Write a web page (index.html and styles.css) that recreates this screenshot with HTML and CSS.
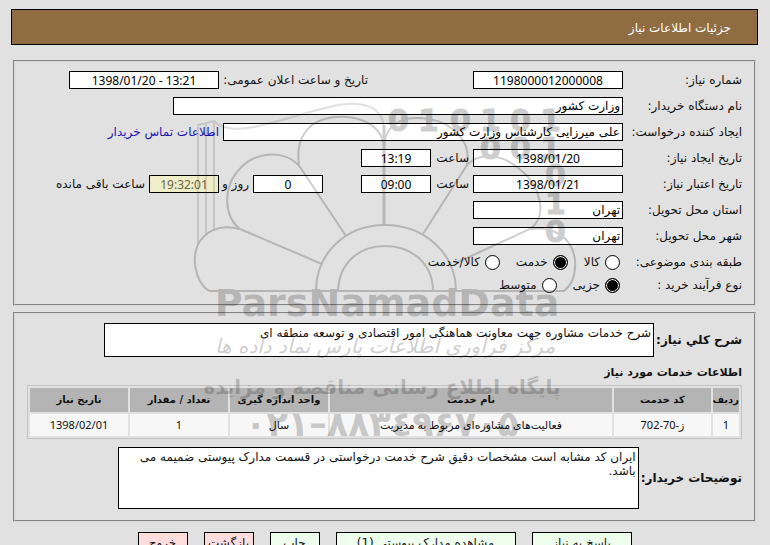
FILE: index.html
```html
<!DOCTYPE html>
<html lang="fa" dir="rtl">
<head>
<meta charset="utf-8">
<title>جزئیات اطلاعات نیاز</title>
<link rel="stylesheet" href="styles.css">
</head>
<body>
<header class="titlebar">جزئیات اطلاعات نیاز</header>

<main class="page">
<form>
  <section class="panel general">
    <div class="row">
      <label class="name" for="num">شماره نیاز:</label>
      <input class="field medium" id="num" value="1198000012000008" readonly>
      <label class="second" for="announce">تاریخ و ساعت اعلان عمومی:</label>
      <input class="field medium" id="announce" value="1398/01/20 - 13:21" dir="ltr" readonly>
    </div>
    <div class="row">
      <label class="name" for="org">نام دستگاه خریدار:</label>
      <input class="field text widest" id="org" value="وزارت کشور" readonly>
    </div>
    <div class="row">
      <label class="name" for="creator">ایجاد کننده درخواست:</label>
      <input class="field text wide" id="creator" value="علی میرزایی کارشناس وزارت کشور" readonly>
      <a class="contact" href="#">اطلاعات تماس خریدار</a>
    </div>
    <div class="row">
      <label class="name" for="cdate">تاریخ ایجاد نیاز:</label>
      <input class="field medium" id="cdate" value="1398/01/20" readonly>
      <label class="hour" for="ctime">ساعت</label>
      <input class="field small" id="ctime" value="13:19" readonly>
    </div>
    <div class="row">
      <label class="name" for="vdate">تاریخ اعتبار نیاز:</label>
      <input class="field medium" id="vdate" value="1398/01/21" readonly>
      <label class="hour" for="vtime">ساعت</label>
      <input class="field small" id="vtime" value="09:00" readonly>
      <input class="field small days" id="days" value="0" readonly>
      <label class="and" for="days">روز و</label>
      <input class="field small timer" id="left" value="19:32:01" readonly>
      <label for="left">ساعت باقی مانده</label>
    </div>
    <div class="row">
      <label class="name" for="province">استان محل تحویل:</label>
      <input class="field text medium" id="province" value="تهران" readonly>
    </div>
    <div class="row">
      <label class="name" for="city">شهر محل تحویل:</label>
      <input class="field text medium" id="city" value="تهران" readonly>
    </div>
    <div class="row choice" role="radiogroup" aria-labelledby="subject">
      <span class="name" id="subject">طبقه بندی موضوعی:</span>
      <label class="option"><input type="radio" name="subject">کالا</label>
      <label class="option"><input type="radio" name="subject" checked>خدمت</label>
      <label class="option"><input type="radio" name="subject">کالا/خدمت</label>
    </div>
    <div class="row choice" role="radiogroup" aria-labelledby="process">
      <span class="name" id="process">نوع فرآیند خرید :</span>
      <label class="option"><input type="radio" name="process" checked>جزیی</label>
      <label class="option"><input type="radio" name="process">متوسط</label>
    </div>
  </section>

  <section class="panel details">
    <div class="block">
      <label for="summary">شرح کلي نیاز:</label>
      <textarea class="area summary" id="summary" readonly>شرح خدمات مشاوره جهت معاونت هماهنگی امور اقتصادی و توسعه منطقه ای</textarea>
    </div>
    <h2>اطلاعات خدمات مورد نیاز</h2>
    <table>
      <colgroup><col class="c1"><col class="c2"><col class="c3"><col class="c4"><col class="c4"><col class="c4"></colgroup>
      <thead>
        <tr><th>ردیف</th><th>کد خدمت</th><th>نام خدمت</th><th>واحد اندازه گیری</th><th>تعداد / مقدار</th><th>تاریخ نیاز</th></tr>
      </thead>
      <tbody>
        <tr><td>1</td><td>ز-70-702</td><td>فعالیت‌های مشاوره‌ای مربوط به مدیریت</td><td>سال</td><td>1</td><td>1398/02/01</td></tr>
      </tbody>
    </table>
    <div class="block">
      <label for="notes">توضیحات خریدار:</label>
      <textarea class="area notes" id="notes" readonly>ایران کد مشابه است مشخصات دقیق شرح خدمت درخواستی در قسمت مدارک پیوستی ضمیمه می باشد.</textarea>
    </div>
  </section>

  <div class="actions">
    <button type="button" class="reply">پاسخ به نیاز</button>
    <button type="button" class="docs">مشاهده مدارک پیوستی (1)</button>
    <button type="button">چاپ</button>
    <button type="button" class="leave">بازگشت</button>
    <button type="button" class="leave">خروج</button>
  </div>
</form>
</main>

<svg class="watermark" viewBox="0 0 770 545" aria-hidden="true">
  <g class="lines">
    <path d="M209 291H565"/>
    <path d="M316 291C316 253 346 225 385 225S456 253 456 291"/>
    <path d="M338 291C339 263 359 246 385 246S433 263 433 291"/>
    <path d="M209 291C194 281 191 255 200 241C210 227 226 225 240 229L322 264"/>
    <path d="M240 229C224 217 223 189 237 172C254 150 286 149 300 167L346 236"/>
    <path d="M299 165C295 137 309 119 336 117C363 115 384 128 384 149"/>
    <path d="M384 125V225" class="thick"/>
    <path d="M384 149C384 129 396 117 419 118C449 119 472 139 467 165L423 234"/>
    <path d="M467 165C479 152 502 154 518 168C540 184 549 216 530 229L458 262"/>
    <path d="M530 229C552 226 572 236 575 260C576 275 572 285 564 291"/>
  </g>
  <g class="lines soft">
    <path d="M198 245V125L214 121C222 130 240 130 254 127C285 120 307 112 333 106C360 100 384 105 384 130"/>
    <path d="M206 236V124M214 231V121"/>
  </g>
  <g class="bits">
    <text x="388" y="131">0</text>
    <text x="418" y="131">1</text>
    <text x="450" y="131">0</text>
    <text x="480" y="131">1</text>
    <text x="510" y="131">0</text>
    <text x="540" y="131">1</text>
    <text x="480" y="159">0</text>
    <text x="510" y="159">0</text>
    <text x="540" y="159">1</text>
    <text x="545" y="186">0</text>
    <text x="545" y="214">1</text>
    <text x="545" y="242">0</text>
  </g>
  <text class="brand" x="387" y="316">ParsNamadData</text>
  <text class="script" x="385" y="353">مرکز فرآوری اطلاعات پارس نماد داده ها</text>
  <text class="slogan" x="382" y="394">پایگاه اطلاع رسانی مناقصه و مزایده</text>
  <text class="phone" x="382" y="436">۰۲۱–۸۸۳٤۹۶۷۰۵</text>
</svg>
</body>
</html>
```

FILE: styles.css
```css
* { box-sizing: border-box; }

html { scrollbar-width: none; }

body {
  position: relative;
  margin: 0;
  padding: 9px 12px 9px 11px;
  background: #e1e1e1;
  color: #111;
  font: 12px/18px "DejaVu Sans", sans-serif;
}

input, textarea, button { font: inherit; color: inherit; }

.titlebar {
  height: 36px;
  padding: 0 26px;
  border: 1px solid #000;
  background: #8f6c42;
  color: #fff;
  line-height: 36px;
}

.page { margin: 15px 2px 0; }

.panel { border: 2px groove #d8d8d8; }

.general { padding: 9px 12px 10px; }

.row {
  display: flex;
  align-items: center;
  gap: 4px;
  height: 18px;
  margin-bottom: 8px;
  white-space: nowrap;
}

.row .name { width: 115px; flex: none; }

.field {
  flex: none;
  height: 18px;
  padding: 0 2px;
  border: 1px solid #000;
  background: #fff;
  color: #000;
  font-family: "Noto Sans", "DejaVu Sans", sans-serif;
  text-align: center;
  line-height: 16px;
}

.field.text { font-family: "DejaVu Sans", sans-serif; text-align: right; }
.small { width: 70px; }
.medium { width: 150px; }
.wide { width: 400px; }
.widest { width: 450px; }

.second { width: 246px; padding-right: 101px; }
.hour { width: 34px; }
.days { margin-right: 34px; }
.and { width: 26px; }
.field.timer { background: #f0eec8; color: #666650; }
.contact { color: #1b12b5; text-decoration: none; }

.choice { margin-bottom: 5px; gap: 0; }
.choice:last-child { margin-bottom: 0; }
.choice .name { width: 122px; }

.option { display: flex; align-items: center; gap: 5px; margin-left: 16px; }

.option input {
  appearance: none;
  width: 15px;
  height: 15px;
  margin: 0;
  border: 1px solid #000;
  border-radius: 50%;
  background: #fff;
}

.option input:checked { background: #000; box-shadow: inset 0 0 0 1px #fff; }

.details { margin-top: 6px; padding: 9px 12px 11px; }

.block { display: flex; align-items: center; gap: 2px; }

.block label { font-weight: bold; white-space: nowrap; }

h2 { margin: 7px 0 3px; font-size: 11px; line-height: 18px; }

.area {
  display: block;
  padding: 2px;
  border: 1px solid #000;
  background: #fff;
  line-height: 14px;
  resize: none;
  overflow: hidden;
}

.summary { width: 550px; height: 34px; }
.notes { width: 521px; height: 62px; }

table {
  width: 100%;
  table-layout: fixed;
  border: 1px solid #c4c4c4;
  border-collapse: separate;
  border-spacing: 2px;
  margin-bottom: 8px;
}

th, td { padding: 0; text-align: center; white-space: nowrap; line-height: 18px; }
th { height: 24px; background: #b4b4b4; font-size: 10px; }
td { height: 22px; background: #f7f7f7; font-family: "Noto Sans", "DejaVu Sans", sans-serif; font-size: 11px; }

.c1 { width: 26px; }
.c2 { width: 97px; }
.c4 { width: 98px; }

.actions { display: flex; justify-content: center; gap: 16px; margin-top: 10px; }

.actions button {
  width: 50px;
  height: 22px;
  padding: 0;
  border: 1px solid #000;
  background: #eeffee;
  white-space: nowrap;
}

.actions .reply { width: 100px; }
.actions .docs { width: 180px; }
.actions .leave { background: #ffdddd; }

.watermark {
  position: absolute;
  top: 0;
  left: 0;
  width: 100%;
  pointer-events: none;
  fill: #000;
  opacity: .19;
}

.lines { fill: none; stroke: #000; stroke-width: 2; }
.thick { stroke-width: 3; }
.soft { opacity: .6; }
.watermark text { font-family: "DejaVu Sans", sans-serif; font-weight: bold; }
.bits text { direction: ltr; font-size: 30px; stroke: #000; stroke-width: 1; }
.brand, .script, .slogan, .phone { text-anchor: middle; }
.brand { direction: ltr; font-size: 38px; }
.watermark .script { font-size: 20px; font-weight: normal; font-style: italic; }
.slogan { font-size: 20px; }
.phone { direction: ltr; font-size: 35px; }
```
